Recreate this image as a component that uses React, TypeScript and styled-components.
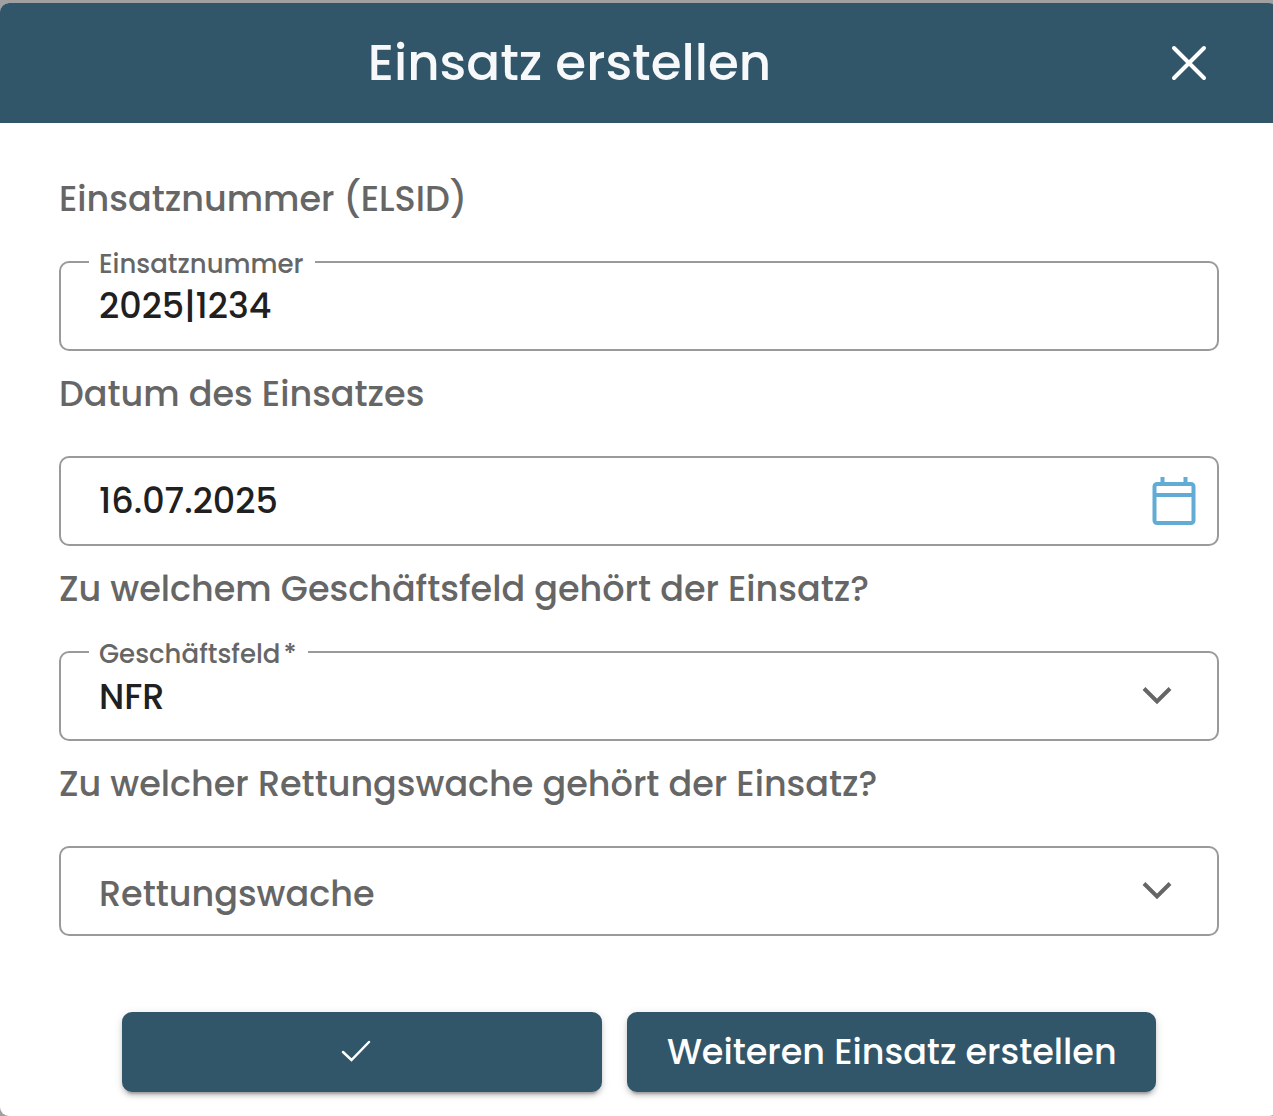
import React, { useState } from "react";
import styled, { createGlobalStyle } from "styled-components";

const color = {
  primary: "#315669",
  backdrop: "#a0a0a0",
  surface: "#ffffff",
  outline: "#9a9a9a",
  label: "#666666",
  text: "#202020",
  accent: "#62abd5",
  title: "#f7f8fa",
};

const GlobalStyle = createGlobalStyle`
  * { box-sizing: border-box; }
  body {
    margin: 0;
    background: ${color.backdrop};
    font-family: Poppins, Inter, "Open Sans", sans-serif;
    font-weight: 500;
    -webkit-font-smoothing: antialiased;
  }
  button, input, select { font: inherit; letter-spacing: inherit; }
`;

const Page = styled.main`
  overflow: hidden;
  padding-top: 3px;
`;

/* The dialog runs slightly past the right edge of the viewport. */
const Dialog = styled.section`
  overflow: hidden;
  margin-right: -5px;
  border-radius: 9px;
  background: ${color.surface};
`;

const Header = styled.header`
  display: flex;
  align-items: center;
  height: 120px;
  padding-right: 39px;
  background: ${color.primary};
  color: ${color.title};
`;

const Title = styled.h1`
  flex: 1;
  margin: 0;
  font-size: 50px;
  font-weight: 500;
  line-height: 60px;
  text-align: center;
`;

const CloseButton = styled.button`
  display: flex;
  align-items: center;
  justify-content: center;
  width: 100px;
  height: 80px;
  padding: 0;
  border: 0;
  background: transparent;
  color: #ffffff;
  cursor: pointer;
`;

const Form = styled.form`
  padding: 55px 59px 24px;
`;

const Group = styled.div`
  & + & { margin-top: 22px; }
`;

const Question = styled.label`
  display: block;
  margin-bottom: 41px;
  color: ${color.label};
  font-size: 35px;
  line-height: 42px;
`;

const Field = styled.div`
  position: relative;
  display: grid;
  align-items: center;
  height: 90px;
  border: 2px solid ${color.outline};
  border-radius: 10px;
`;

const FloatingLabel = styled.label`
  position: absolute;
  top: -15px;
  left: 28px;
  padding: 0 11px 0 10px;
  background: ${color.surface};
  color: ${color.label};
  font-size: 26px;
  line-height: 32px;
`;

const Required = styled.span`
  margin-left: 3px;
`;

const TextInput = styled.input`
  grid-area: 1 / 1;
  width: 100%;
  height: 86px;
  padding: 0 90px 2px 38px;
  border: 0;
  outline: 0;
  background: transparent;
  color: ${color.text};
  font-size: 35px;
`;

const Select = styled.select<{ $empty: boolean }>`
  grid-area: 1 / 1;
  appearance: none;
  width: 100%;
  height: 86px;
  padding: ${(p) => (p.$empty ? "4px" : "0")} 90px 0 38px;
  border: 0;
  outline: 0;
  background: transparent;
  color: ${(p) => (p.$empty ? color.label : color.text)};
  font-size: 35px;
`;

const Chevron = styled.svg`
  grid-area: 1 / 1;
  justify-self: end;
  margin-right: 45px;
  pointer-events: none;
`;

const CalendarButton = styled.button`
  grid-area: 1 / 1;
  justify-self: end;
  display: flex;
  margin-right: 21px;
  padding: 0;
  border: 0;
  background: transparent;
  color: ${color.accent};
  cursor: pointer;
`;

const Actions = styled.div`
  display: grid;
  grid-template-columns: 10fr 11fr;
  gap: 25px;
  margin-top: 76px;
  padding: 0 63px;
`;

const ActionButton = styled.button`
  display: flex;
  align-items: center;
  justify-content: center;
  height: 80px;
  padding: 0 0 2px;
  border: 0;
  border-radius: 10px;
  background: ${color.primary};
  box-shadow: 0 6px 2px -4px rgba(0, 0, 0, 0.2), 0 4px 4px rgba(0, 0, 0, 0.14),
    0 2px 10px rgba(0, 0, 0, 0.12);
  color: #ffffff;
  font-size: 35px;
  white-space: nowrap;
  cursor: pointer;
`;

const CheckIcon = styled.svg`
  margin-right: 12px;
`;

function ChevronDown() {
  return (
    <Chevron width="30" height="20" viewBox="0 0 30 20" fill="none" aria-hidden="true">
      <path d="M2 2.5 15 15.5 28 2.5" stroke={color.label} strokeWidth="4" />
    </Chevron>
  );
}

export default function App() {
  const [number, setNumber] = useState("2025|1234");
  const [date, setDate] = useState("16.07.2025");
  const [division, setDivision] = useState("NFR");
  const [station, setStation] = useState("");

  return (
    <Page>
      <GlobalStyle />
      <Dialog role="dialog" aria-labelledby="dialog-title">
        <Header>
          <Title id="dialog-title">Einsatz erstellen</Title>
          <CloseButton type="button" aria-label="Schließen">
            <svg width="36" height="36" viewBox="0 0 36 36" fill="none" aria-hidden="true">
              <path d="M3 3 33 33M33 3 3 33" stroke="currentColor" strokeWidth="4" strokeLinecap="round" />
            </svg>
          </CloseButton>
        </Header>
        <Form onSubmit={(e) => e.preventDefault()}>
          <Group>
            <Question htmlFor="number">Einsatznummer (ELSID)</Question>
            <Field>
              <FloatingLabel htmlFor="number">Einsatznummer</FloatingLabel>
              <TextInput id="number" value={number} onChange={(e) => setNumber(e.target.value)} />
            </Field>
          </Group>
          <Group>
            <Question htmlFor="date">Datum des Einsatzes</Question>
            <Field>
              <TextInput id="date" value={date} onChange={(e) => setDate(e.target.value)} />
              <CalendarButton type="button" aria-label="Kalender öffnen">
                <svg width="44" height="50" viewBox="0 0 44 50" fill="none" stroke="currentColor" aria-hidden="true">
                  <rect x="2.5" y="8" width="39" height="39" rx="2.5" strokeWidth="4" />
                  <path d="M2.5 19H41.5M10.5 1V8M33.5 1V8" strokeWidth="4" />
                </svg>
              </CalendarButton>
            </Field>
          </Group>
          <Group>
            <Question htmlFor="division">Zu welchem Geschäftsfeld gehört der Einsatz?</Question>
            <Field>
              <FloatingLabel htmlFor="division">
                Geschäftsfeld<Required>*</Required>
              </FloatingLabel>
              <Select id="division" required $empty={!division} value={division} onChange={(e) => setDivision(e.target.value)}>
                <option value="NFR">NFR</option>
              </Select>
              <ChevronDown />
            </Field>
          </Group>
          <Group>
            <Question htmlFor="station">Zu welcher Rettungswache gehört der Einsatz?</Question>
            <Field>
              <Select id="station" $empty={!station} value={station} onChange={(e) => setStation(e.target.value)}>
                <option value="">Rettungswache</option>
              </Select>
              <ChevronDown />
            </Field>
          </Group>
          <Actions>
            <ActionButton type="submit" aria-label="Speichern">
              <CheckIcon width="30" height="22" viewBox="0 0 30 22" fill="none" aria-hidden="true">
                <path d="M2 12 10.5 20 28 2" stroke="currentColor" strokeWidth="2.5" strokeLinecap="round" />
              </CheckIcon>
            </ActionButton>
            <ActionButton type="button">Weiteren Einsatz erstellen</ActionButton>
          </Actions>
        </Form>
      </Dialog>
    </Page>
  );
}
